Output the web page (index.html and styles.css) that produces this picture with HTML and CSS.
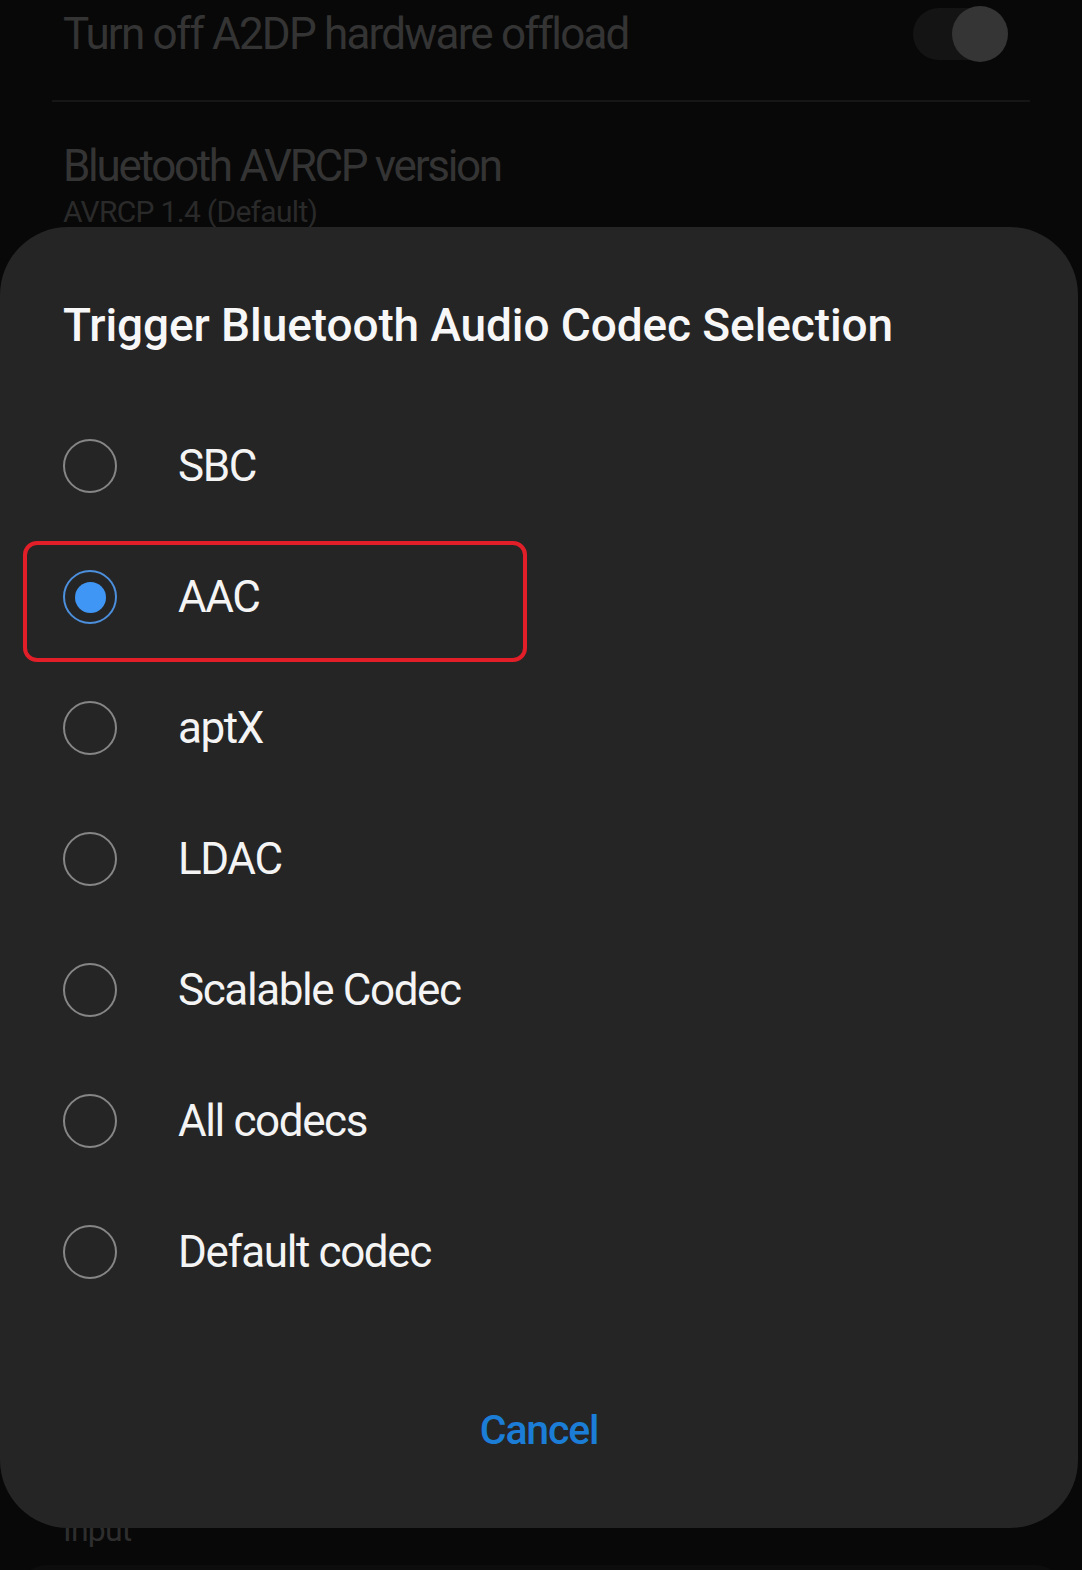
FILE: index.html
```html
<!DOCTYPE html>
<html lang="en">
<head>
<meta charset="utf-8">
<title>Trigger Bluetooth Audio Codec Selection</title>
<link rel="stylesheet" href="styles.css">
</head>
<body>
<div class="page">
  <div class="group">
    <div class="pref pref-switch">
      <span class="pref-title">Turn off A2DP hardware offload</span>
      <span class="switch"><span class="switch-thumb"></span></span>
    </div>
    <div class="divider"></div>
    <div class="pref">
      <div class="pref-title pref-title-narrow">Bluetooth AVRCP version</div>
      <div class="pref-summary">AVRCP 1.4 (Default)</div>
    </div>
    <div class="pref pref-under">
      <div class="pref-title">Bluetooth MAP version</div>
      <div class="pref-summary">MAP 1.2 (Default)</div>
    </div>
    <div class="pref pref-under">
      <div class="pref-title">Bluetooth Audio Codec</div>
      <div class="pref-summary">AAC</div>
    </div>
    <div class="pref pref-under">
      <div class="pref-title">Bluetooth Audio Sample Rate</div>
      <div class="pref-summary">44.1 kHz</div>
    </div>
    <div class="pref pref-under">
      <div class="pref-title">Bluetooth Audio Bits Per Sample</div>
      <div class="pref-summary">16 bits/sample</div>
    </div>
    <div class="pref pref-under">
      <div class="pref-title">Bluetooth Audio Channel Mode</div>
      <div class="pref-summary">Stereo</div>
    </div>
    <div class="pref pref-under">
      <div class="pref-title">Bluetooth Audio LDAC Codec: Playback Quality</div>
      <div class="pref-summary">Best Effort (Adaptive Bit Rate)</div>
    </div>
    <div class="pref pref-under">
      <div class="pref-title">Maximum connected Bluetooth audio devices</div>
      <div class="pref-summary">Use System Default: 5</div>
    </div>
  </div>
  <div class="category">Input</div>
  <div class="group group-next"></div>
</div>

<div class="dialog" role="dialog" aria-labelledby="dlg-title">
  <h1 class="dialog-title" id="dlg-title">Trigger Bluetooth Audio Codec Selection</h1>
  <ul class="options">
    <li class="option"><span class="radio"></span><span class="option-label">SBC</span></li>
    <li class="option option-highlight"><span class="radio radio-on"></span><span class="option-label">AAC</span></li>
    <li class="option"><span class="radio"></span><span class="option-label">aptX</span></li>
    <li class="option"><span class="radio"></span><span class="option-label">LDAC</span></li>
    <li class="option"><span class="radio"></span><span class="option-label">Scalable Codec</span></li>
    <li class="option"><span class="radio"></span><span class="option-label">All codecs</span></li>
    <li class="option"><span class="radio"></span><span class="option-label">Default codec</span></li>
  </ul>
  <div class="dialog-actions">
    <button class="btn-cancel" type="button">Cancel</button>
  </div>
</div>
</body>
</html>
```

FILE: styles.css
```css
*, *::before, *::after { box-sizing: border-box; }

html, body {
  margin: 0;
  padding: 0;
}

body {
  width: 1082px;
  height: 1570px;
  overflow: hidden;
  background: #080808;
  font-family: Roboto, "Noto Sans", "Liberation Sans", sans-serif;
  position: relative;
}

/* ---------- background settings page (dimmed) ---------- */
.page {
  padding: 0 52px;
}

.group {
  display: flex;
  flex-direction: column;
}

.pref {
  height: 162.75px;
  padding: 38px 0 0 11px;
  display: flex;
  flex-direction: column;
  overflow: hidden;
}

.pref-under {
  height: 177.57px;
}

.pref-switch {
  height: 68px;
  padding: 0 0 0 11px;
  flex-direction: row;
  align-items: center;
  justify-content: space-between;
  margin-bottom: 32px;
  overflow: visible;
}

.pref-title {
  font-size: 44px;
  line-height: 52px;
  letter-spacing: -1.8px;
  color: #343434;
  white-space: nowrap;
}

.pref-title-narrow {
  letter-spacing: -2.3px;
}

.pref-summary {
  font-size: 30px;
  line-height: 40px;
  letter-spacing: -0.7px;
  color: #2a2a2a;
  white-space: nowrap;
}

.divider {
  height: 2px;
  background: #161616;
}

.switch {
  position: relative;
  width: 85px;
  height: 52px;
  border-radius: 26px;
  background: #141414;
  margin-right: 32px;
}

.switch-thumb {
  position: absolute;
  right: -10px;
  top: -2px;
  width: 56px;
  height: 56px;
  border-radius: 50%;
  background: #353535;
}

.category {
  padding: 2px 0 0 11px;
  font-size: 32px;
  line-height: 40px;
  letter-spacing: -0.8px;
  color: #2e2e2e;
}

.group-next {
  margin: 15px -35px 0;
  height: 60px;
  border-radius: 40px;
  background: #0d0d0d;
}

/* ---------- dialog ---------- */
.dialog {
  position: absolute;
  left: 0;
  top: 227px;
  width: 1078px;
  height: 1301px;
  background: #252525;
  border-radius: 68px;
  padding: 70px 0 0 0;
}

.dialog-title {
  margin: 0;
  padding-left: 63px;
  font-size: 46px;
  line-height: 56px;
  font-weight: 500;
  letter-spacing: -0.1px;
  color: #f7f7f7;
}

.options {
  list-style: none;
  margin: 47.5px 0 0 0;
  padding: 0;
}

.option {
  position: relative;
  height: 131px;
  display: flex;
  align-items: center;
  padding-left: 63px;
}

.radio {
  flex: none;
  width: 54px;
  height: 54px;
  border-radius: 50%;
  border: 2px solid #868686;
  display: flex;
  align-items: center;
  justify-content: center;
}

.radio-on {
  border-color: #4c8fdc;
}

.radio-on::after {
  content: "";
  width: 31px;
  height: 31px;
  border-radius: 50%;
  background: #4096f5;
}

.option-label {
  margin-left: 61px;
  font-size: 44px;
  line-height: 131px;
  letter-spacing: -1.4px;
  color: #f4f4f4;
}

.option-highlight::after {
  content: "";
  position: absolute;
  left: 23px;
  top: 9.5px;
  width: 504px;
  height: 121px;
  border: 4px solid #e21f29;
  border-radius: 14px;
  pointer-events: none;
}

.dialog-actions {
  display: flex;
  justify-content: center;
  margin-top: 60px;
}

.btn-cancel {
  background: none;
  border: 0;
  padding: 0 40px;
  height: 104px;
  line-height: 104px;
  font-family: Roboto, "Noto Sans", "Liberation Sans", sans-serif;
  font-size: 41px;
  font-weight: 500;
  letter-spacing: -1.2px;
  color: #1b7dd6;
  cursor: pointer;
}
```
